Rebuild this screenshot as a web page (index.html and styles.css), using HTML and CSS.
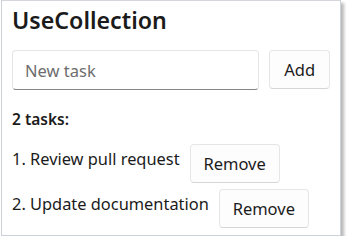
FILE: index.html
```html
<!DOCTYPE html>
<html>
<head>
<meta charset="utf-8">
<link rel="stylesheet" href="styles.css">
</head>
<body>
<div class="window">
  <h1 class="title">UseCollection</h1>
  <div class="input-row">
    <div class="textbox"><span class="placeholder">New task</span></div>
    <button class="btn add">Add</button>
  </div>
  <div class="count">2 tasks:</div>
  <div class="row">
    <span class="item">1. Review pull request</span>
    <button class="btn remove">Remove</button>
  </div>
  <div class="row">
    <span class="item">2. Update documentation</span>
    <button class="btn remove">Remove</button>
  </div>
</div>
</body>
</html>
```
FILE: styles.css
```css
html, body {
  margin: 0;
  padding: 0;
  background: #ffffff;
}
body {
  font-family: "Noto Sans", "Open Sans", sans-serif;
  color: #1b1b1b;
}
.window {
  box-sizing: border-box;
  margin-left: 1px;
  width: 340px;
  height: 236px;
  border: 1px solid #ccd0d8;
  border-top-color: #d4d6dc;
  background: #ffffff;
  box-shadow: 3px 3px 3px rgba(0, 0, 0, 0.28);
  padding: 4px 10px 0 10px;
}
.title {
  margin: 0;
  font-size: 23.2px;
  font-weight: 600;
  line-height: 30px;
}
.input-row {
  display: flex;
  gap: 10px;
  margin-top: 15px;
}
.textbox {
  box-sizing: border-box;
  width: 249px;
  height: 40px;
  border: 1px solid #e5e5e5;
  border-bottom: 1px solid #868686;
  border-radius: 4px;
  display: flex;
  align-items: center;
  padding-left: 12px;
}
.placeholder {
  font-size: 16.5px;
  color: #6d6d6d;
}
.btn {
  box-sizing: border-box;
  height: 39px;
  border: 1px solid #e6e6e6;
  border-bottom-color: #d6d6d6;
  border-radius: 4px;
  background: #fdfdfd;
  font-family: inherit;
  font-size: 16.5px;
  color: #1b1b1b;
  padding: 0;
}
.add {
  width: 61px;
}
.count {
  margin-top: 19px;
  font-size: 15.5px;
  font-weight: 600;
  line-height: 20px;
}
.row {
  display: flex;
  align-items: flex-start;
  gap: 10px;
}
.row + .row {
  margin-top: 6px;
}
.count + .row {
  margin-top: 15px;
}
.item {
  font-size: 16.4px;
  line-height: 20px;
  margin-top: 5px;
}
.remove {
  width: 90px;
}
```
